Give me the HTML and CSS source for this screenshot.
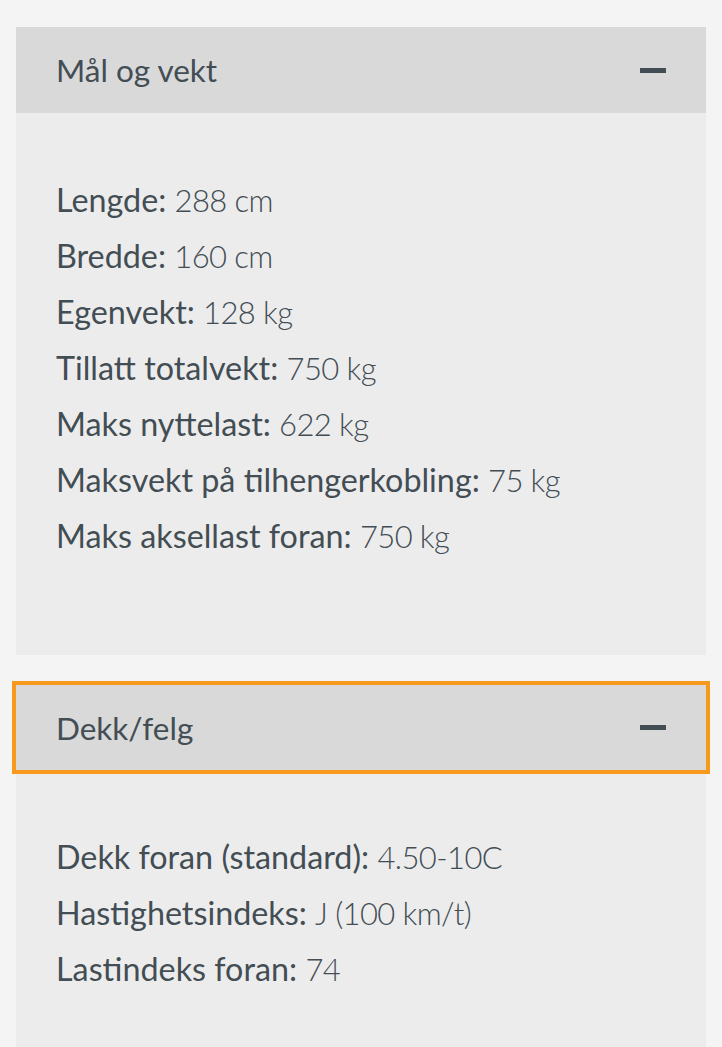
FILE: index.html
```html
<!DOCTYPE html>
<html lang="no">
<head>
<meta charset="utf-8">
<title>Spesifikasjoner</title>
<link rel="stylesheet" href="styles.css">
</head>
<body>
<main class="page">
  <section class="panel">
    <div class="panel-header">
      <span class="panel-title">Mål og vekt</span>
      <span class="minus"></span>
    </div>
    <ul class="panel-body">
      <li><span class="label">Lengde:</span> <span class="value">288 cm</span></li>
      <li><span class="label">Bredde:</span> <span class="value">160 cm</span></li>
      <li><span class="label">Egenvekt:</span> <span class="value">128 kg</span></li>
      <li><span class="label">Tillatt totalvekt:</span> <span class="value">750 kg</span></li>
      <li><span class="label">Maks nyttelast:</span> <span class="value">622 kg</span></li>
      <li><span class="label">Maksvekt på tilhengerkobling:</span> <span class="value">75 kg</span></li>
      <li><span class="label">Maks aksellast foran:</span> <span class="value">750 kg</span></li>
    </ul>
  </section>
  <section class="panel">
    <div class="panel-header focused">
      <span class="panel-title">Dekk/felg</span>
      <span class="minus"></span>
    </div>
    <ul class="panel-body">
      <li><span class="label">Dekk foran (standard):</span> <span class="value">4.50-10C</span></li>
      <li><span class="label">Hastighetsindeks:</span> <span class="value">J (100 km/t)</span></li>
      <li><span class="label">Lastindeks foran:</span> <span class="value">74</span></li>
    </ul>
  </section>
</main>
</body>
</html>
```

FILE: styles.css
```css
html, body {
  margin: 0;
  padding: 0;
  background: #f4f4f4;
}
body {
  font-family: Lato, "Liberation Sans", sans-serif;
  color: #434d54;
}
.page {
  padding: 27px 16px 0;
  display: flex;
  flex-direction: column;
  gap: 30px;
}
.panel {
  display: flex;
  flex-direction: column;
}
.panel-header {
  height: 86px;
  background: #d9d9d9;
  display: flex;
  align-items: center;
  justify-content: space-between;
  padding: 0 40px 0 40px;
  box-sizing: border-box;
}
.panel-header.focused {
  height: 85px;
  outline: 4px solid #f7991c;
  position: relative;
  z-index: 1;
}
.panel-title {
  font-size: 31.5px;
  font-weight: 400;
}
.minus {
  width: 26px;
  height: 5px;
  background: #434d54;
}
.panel-body {
  list-style: none;
  margin: 0;
  background: #ececec;
  padding: 59px 40px 91px 40px;
}
.panel-body li {
  font-size: 32.3px;
  line-height: 56px;
  white-space: nowrap;
}
.label {
  font-weight: 400;
}
.value {
  font-size: 31px;
  font-weight: 300;
  letter-spacing: -0.6px;
}
```
